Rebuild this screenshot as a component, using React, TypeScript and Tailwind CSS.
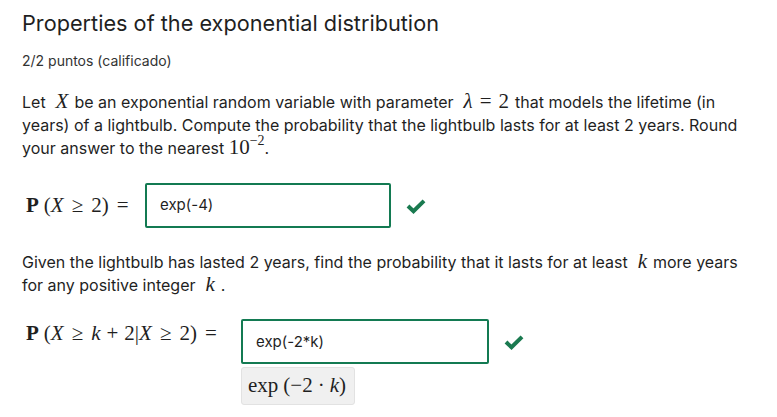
import React from "react";

const I = ({ children }: { children: React.ReactNode }) => <i className="font-['Liberation_Serif',serif]">{children}</i>;
// relation / binary operator with KaTeX-like spacing
const Rel = ({ children }: { children: React.ReactNode }) => <span className="mx-[8px]">{children}</span>;
const Bin = ({ children }: { children: React.ReactNode }) => <span className="mx-[6px]">{children}</span>;

const M = ({ children }: { children: React.ReactNode }) => (
  <span className="ml-[10px] mr-[6px] font-['Liberation_Serif',serif] text-[21px] leading-none">{children}</span>
);

function Check() {
  return (
    <svg width="20" height="16" viewBox="0 0 20 16" className="shrink-0">
      <path d="M2 8 L7.5 13.2 L18 2.8" fill="none" stroke="#1a7a50" strokeWidth="4" />
    </svg>
  );
}

export default function App() {
  return (
    <div className="w-[777px] h-[417px] overflow-hidden bg-white px-[22px] font-['Inter',sans-serif] text-[#1f1f1f]">
      <h1 className="pt-[9px] text-[21.7px] leading-[28px] font-normal">Properties of the exponential distribution</h1>
      <p className="mt-[14px] text-[14px] leading-[20px] text-[#333]">2/2 puntos (calificado)</p>

      <p className="mt-[20px] text-[16px] leading-[23px]">
        Let<M><I>X</I></M>be an exponential random variable with parameter
        <M>
          <I>λ</I>
          <span className="mx-[7px]">=</span>2
        </M>
        that models the lifetime (in years) of a lightbulb. Compute the probability that the lightbulb lasts for at least 2 years. Round
        your answer to the nearest{" "}
        <span className="font-['Liberation_Serif',serif] text-[21px] leading-none">
          10<span className="relative top-[-9px] text-[14px] leading-none">−2</span>
        </span>
        .
      </p>

      {/* answer 1 */}
      <div className="mt-[23px] flex items-center">
        <div className="w-[123px] pl-[4px] font-['Liberation_Serif',serif] text-[21px] whitespace-nowrap">
          <b>P</b>
          <span className="ml-[5px]">(</span>
          <I>X</I>
          <Rel>≥</Rel>2)
          <Rel>=</Rel>
        </div>
        <div className="w-[246px] h-[45px] border-2 border-[#137a52] rounded-[2px] flex items-center pl-[13px] text-[15px]">
          exp(-4)
        </div>
        <div className="ml-[15px]"><Check /></div>
      </div>

      <p className="mt-[23px] text-[16px] leading-[23px]">
        Given the lightbulb has lasted 2 years, find the probability that it lasts for at least<M><I>k</I></M>more years
        for any positive integer<M><I>k</I></M>.
      </p>

      {/* answer 2 */}
      <div className="mt-[22px] flex items-start">
        <div className="w-[219px] pl-[4px] pt-[2px] font-['Liberation_Serif',serif] text-[21px] leading-[24px] whitespace-nowrap">
          <b>P</b>
          <span className="ml-[5px]">(</span>
          <I>X</I>
          <Rel>≥</Rel>
          <I>k</I>
          <Bin>+</Bin>2|<I>X</I>
          <Rel>≥</Rel>2)
          <Rel>=</Rel>
        </div>
        <div className="flex flex-col gap-[3px]">
          <div className="flex items-center">
            <div className="w-[248px] h-[45px] border-2 border-[#137a52] rounded-[2px] flex items-center pl-[13px] pt-[2px] text-[15px]">
              exp(-2*k)
            </div>
            <div className="ml-[15px]"><Check /></div>
          </div>
          <div className="w-[114px] h-[38px] rounded-[3px] border border-[#e2e2e2] bg-[#f0f0f0] flex items-center pl-[6px] font-['Liberation_Serif',serif] text-[21px] whitespace-nowrap">
            exp<span className="ml-[5px]">(</span>−2<span className="mx-[5px]">·</span><I>k</I>)
          </div>
        </div>
      </div>
    </div>
  );
}
